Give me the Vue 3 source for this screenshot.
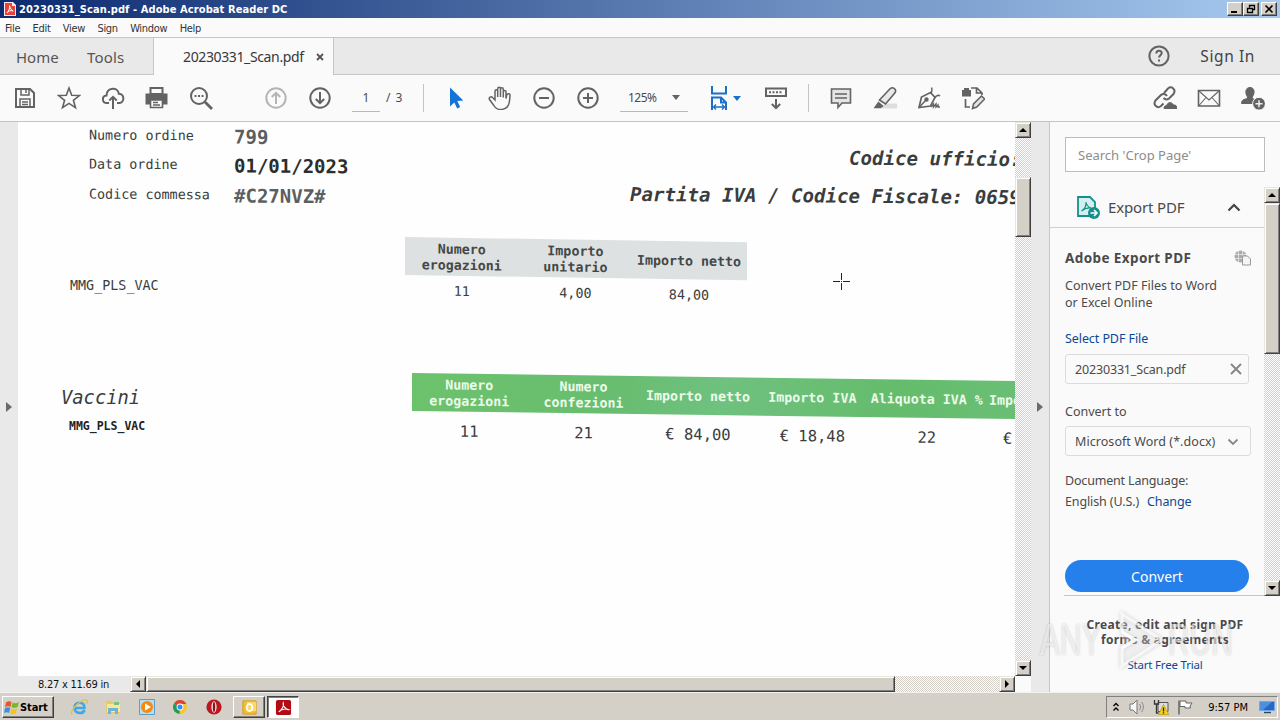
<template>
  <div class="desktop">
    <header class="title-bar">
      <svg class="app-icon" viewBox="0 0 12 14">
        <path d="M0 0h9l3 3v11H0z" fill="#fbe9e7" />
        <path d="M1 1h7v3h3v9H1z" fill="#e8433a" />
        <path d="M3 11c2-2 3-5 2.600-7.500M3 11c1-2 4-3 6-2M5.600 4c.3 2 1.500 4 3.600 5" fill="none" stroke="#fff" stroke-width="1" />
      </svg>
      <span class="title-text">20230331_Scan.pdf - Adobe Acrobat Reader DC</span>
      <div class="window-buttons">
        <button class="win-btn"><svg viewBox="0 0 12 10"><path d="M2 8h6" stroke="#000" stroke-width="2" /></svg></button>
        <button class="win-btn"><svg viewBox="0 0 12 10"><path d="M4.500 3.500v-2h5v4h-2M2.500 4.500h5v4h-5zM4 1.500h6M2 4.500h6" fill="none" stroke="#000" stroke-width="1.300" /></svg></button>
        <button class="win-btn close"><svg viewBox="0 0 12 10"><path d="M2.500 1.500l7 7M9.500 1.500l-7 7" stroke="#000" stroke-width="1.600" /></svg></button>
      </div>
    </header>

    <nav class="menu-bar">
      <span v-for="item in menus" :key="item">{{ item }}</span>
    </nav>

    <div class="tab-bar">
      <div class="main-tabs">
        <span class="home">Home</span>
        <span class="tools">Tools</span>
      </div>
      <div class="doc-tab">
        <span>20230331_Scan.pdf</span>
        <svg viewBox="0 0 8 8"><path d="M1 1l6 6M7 1L1 7" stroke="#555" stroke-width="1.800" /></svg>
      </div>
      <div class="account">
        <svg class="icon" viewBox="0 0 24 24">
          <circle cx="12" cy="12" r="9.600" />
          <path d="M9.300 9.500c0-3.600 5.400-3.600 5.400-.4 0 2-2.700 2.200-2.700 4.500" />
          <path d="M12 15.500v2" />
        </svg>
        <span>Sign In</span>
      </div>
    </div>

    <div class="toolbar">
      <div class="tool-group first">
        <button class="tool">
          <svg class="icon" viewBox="0 0 24 24"><path d="M3 3h14l4 4v14H3z" /><path d="M8 3v6h8V3M13 4v3M7 21v-8h10v8M9 16h6M9 18.500h6" stroke-width="1.500" /></svg>
        </button>
        <button class="tool">
          <svg class="icon" viewBox="0 0 24 24"><path d="M12 2l2.700 7.200 7.700.3-6 4.800 2.100 7.400-6.500-4.300-6.500 4.300 2.100-7.400-6-4.800 7.700-.3z" stroke-width="1.600" /></svg>
        </button>
        <button class="tool">
          <svg class="icon" viewBox="0 0 24 24"><path d="M8 17H6C.8 17 .5 10 5.500 9.500 6 .8 17 1 17.800 7.700 24 7.500 23.500 17 18.500 17H16" /><path d="M12 23V11M8.300 14.500L12 10.800l3.700 3.700" /></svg>
        </button>
        <button class="tool">
          <svg class="icon" viewBox="0 0 24 24"><path d="M5.500 2h12v6h-12z" fill="#fafafa" /><path d="M1.500 8.500h20v9h-4v-3h-12v3h-4z" class="solid" /><path d="M5.500 14h12v7.500h-12zM8 16.500h5M8 19h7" fill="#fafafa" stroke-width="1.600" /></svg>
        </button>
        <button class="tool">
          <svg class="icon" viewBox="0 0 24 24"><circle cx="10" cy="10" r="8" /><path d="M16 16l7 7" stroke-width="2.800" /><path d="M5.500 10h2M9 10h2M12.500 10h2" stroke-width="1.800" /></svg>
        </button>
      </div>
      <div class="tool-group">
        <button class="tool disabled">
          <svg class="icon" viewBox="0 0 24 24"><circle cx="12" cy="12" r="9.700" /><path d="M12 18V7M7.800 11L12 6.800l4.200 4.200" /></svg>
        </button>
        <button class="tool">
          <svg class="icon" viewBox="0 0 24 24"><circle cx="12" cy="12" r="9.700" /><path d="M12 6v11M7.800 13l4.200 4.200 4.200-4.200" /></svg>
        </button>
      </div>
      <div class="page-nav">
        <span class="page-input">{{ page }}</span>
        <span class="page-total">/ {{ pageCount }}</span>
      </div>
      <i class="separator"></i>
      <div class="tool-group cursors">
        <button class="tool">
          <svg class="icon" viewBox="0 0 24 24"><path d="M6 1.500v19l4.300-4.100 2.900 6.200 3-1.500-2.900-6 6-.7z" fill="#1473d6" stroke="none" /></svg>
        </button>
        <button class="tool">
          <svg class="icon" viewBox="0 0 24 24"><path d="M7 14V5.300c0-2.200 2.700-2.200 2.700 0V11 3c0-2.200 2.800-2.200 2.800 0v8-7.500c0-2.200 2.800-2.200 2.800 0V11.500 6c0-2 2.700-2 2.700 0v6.500l.8-3.500c.7-2 3.700-1.500 3.200.7L21.500 15c-1 10-12.500 11-16 4L1.500 13.500c-1-2 1.500-3.500 3-2z" stroke-width="1.500" /></svg>
        </button>
        <button class="tool">
          <svg class="icon" viewBox="0 0 24 24"><circle cx="12" cy="12" r="9.700" /><path d="M7 12h10" /></svg>
        </button>
        <button class="tool">
          <svg class="icon" viewBox="0 0 24 24"><circle cx="12" cy="12" r="9.700" /><path d="M7 12h10M12 7v10" /></svg>
        </button>
      </div>
      <div class="zoom-select">
        <span>125%</span>
        <i class="caret"></i>
      </div>
      <div class="fit-width">
        <svg class="icon blue" viewBox="0 0 20 26"><path d="M3 1v7.500h14V1" /><path d="M3 25V12.500h9l5 5V25M12 12.500v5h5" /><path d="M4.500 22h11M7 19.500L4.500 22 7 24.500M13 19.500l2.500 2.500-2.500 2.500" stroke-width="1.400" /></svg>
        <i class="caret blue"></i>
      </div>
      <button class="tool">
        <svg class="icon" viewBox="0 0 24 24"><path d="M2 2.500h20v7.500H2z" /><path d="M5 6.200h14" stroke-dasharray="2 1.500" /><path d="M12 13v8.500M7.800 18l4.200 4 4.200-4" /></svg>
      </button>
      <i class="separator"></i>
      <div class="tool-group comments">
        <button class="tool">
          <svg class="icon" viewBox="0 0 24 24"><path d="M2.500 3h19v14H13l-4 4.500V17H2.500z" fill="#e4e4e4" stroke-width="1.600" /><path d="M6 8h12M6 12h12" stroke-width="1.500" /></svg>
        </button>
        <button class="tool">
          <svg class="icon" viewBox="0 0 24 24"><path d="M12 17.500h12v5H8z" fill="#ddd" stroke="none" /><path d="M6.500 14L17 2.800c3-2.500 7 .5 5 4L12.500 18z" fill="#e8e8e8" stroke-width="1.600" /><path d="M5.500 16.500l4 3.500-2 1.500H2z" class="solid" stroke-width="1.500" /></svg>
        </button>
        <button class="tool">
          <svg class="icon" viewBox="0 0 24 24"><path d="M2 21.500L4.500 11l9-4.500 4.500 5-4.500 8.500z" stroke-width="1.700" /><path d="M2 21.500l6.500-7M13 7c2.500 0 2-4.500 1.500-5.500M18 12c1-3 4-3 5-2" stroke-width="1.500" /><circle cx="9.500" cy="13.500" r="1.200" class="solid" /><path d="M14 21l2.500-3v3l2.500-3v3l2-2v2h2" stroke-width="1.400" /></svg>
        </button>
        <button class="tool">
          <svg class="icon" viewBox="0 0 24 24"><path d="M2 5h7v4.500H2zM4 3h3v2H4z" class="solid" /><path d="M10 2h6l5 5v2M15.500 2v5H21M4.500 13v8H9" stroke-width="1.700" /><path d="M11.500 22.500l1-4.500 8-8 3.200 3-8 8z" fill="#e4e4e4" stroke-width="1.500" /></svg>
        </button>
      </div>
      <div class="tool-group sharing">
        <button class="tool">
          <svg class="icon" viewBox="0 0 24 24"><path d="M11 7l4-4.500c3.500-3 8.500 1 5.500 5.500l-4.500 4.500c-2 1.500-4 1-5.500-.5" /><path d="M14 10c-1.500-2.500-4.500-2.500-6-1L2.500 14.500c-3 4.500 2 8.500 5.500 5.500l2.500-2.500" /><path d="M11 22.500c0-2 1-3 2.700-3 .8-4 6-3.500 6.500-.5 2.800-.5 3.800 1.500 3.800 3.500z" class="solid" stroke-width="1" /></svg>
        </button>
        <button class="tool">
          <svg class="icon" viewBox="0 0 24 24"><path d="M1.500 4.500h21v15.500h-21z" stroke-width="1.600" /><path d="M2 5l10 9L22 5M2 19.500l7-8M22 19.500l-7-8" stroke-width="1.100" /></svg>
        </button>
        <button class="tool">
          <svg class="icon" viewBox="0 0 24 24"><path d="M9 1.500c5 0 5 6 2.300 9.500v1.500c3 1 4.200 2 4.200 5H.500c0-3.500 2-4 6-5V11C4 7.500 4 1.500 9 1.500z" class="solid" stroke-width="1" /><circle cx="18" cy="17.700" r="6.400" class="solid" stroke="#fafafa" stroke-width="1" /><path d="M14.500 17.700h7M18 14.200v7" stroke="#eee" stroke-width="1.500" /></svg>
        </button>
      </div>
    </div>

    <main class="workspace">
      <div class="gutter left"><i class="arrow-right"></i></div>

      <section class="doc-view">
        <div class="doc-body">
          <div class="scan">
            <div class="scan-top">
              <dl class="order">
                <template v-for="row in order" :key="row.label">
                  <dt>{{ row.label }}</dt>
                  <dd :class="row.tone">{{ row.value }}</dd>
                </template>
              </dl>
              <div class="codes">
                <p class="office">Codice ufficio:</p>
                <p>Partita IVA / Codice Fiscale: 0659</p>
              </div>
            </div>

            <div class="entry">
              <span class="entry-name">MMG_PLS_VAC</span>
              <div class="table grey">
                <div class="table-head">
                  <span v-for="col in summary" :key="col.head">{{ col.head }}</span>
                </div>
                <div class="table-row">
                  <span v-for="col in summary" :key="col.head">{{ col.value }}</span>
                </div>
              </div>
            </div>

            <div class="entry vaccines">
              <div class="entry-title">
                <h2>Vaccini</h2>
                <b>MMG_PLS_VAC</b>
              </div>
              <div class="table green">
                <div class="table-head">
                  <span v-for="col in vaccines" :key="col.head">{{ col.head }}</span>
                </div>
                <div class="table-row">
                  <span v-for="col in vaccines" :key="col.head">{{ col.value }}</span>
                </div>
              </div>
            </div>
            <i class="crosshair"></i>
          </div>
          <div class="scroll-y">
            <button class="scroll-btn up"></button>
            <div class="track"><div class="thumb"></div></div>
            <button class="scroll-btn down"></button>
          </div>
        </div>
        <div class="doc-foot">
          <span class="page-size">8.27 x 11.69 in</span>
          <button class="scroll-btn prev"></button>
          <div class="track-x"><div class="thumb"></div></div>
          <button class="scroll-btn next"></button>
          <i class="corner"></i>
        </div>
      </section>

      <div class="gutter right"><i class="arrow-right"></i></div>

      <aside class="panel">
        <div class="search">Search 'Crop Page'</div>
        <div class="panel-scroll">
          <div class="panel-content">
            <div class="export-head">
              <svg class="export-icon" viewBox="0 0 24 24">
                <path d="M2 2h12l5 5v14H2z" fill="#d5efee" stroke="#14908c" stroke-width="1.800" />
                <path d="M5.500 16c3-2 5-5 4.500-9 .5 3 2 5 5 6-3-.5-6 0-9.500 3z" fill="none" stroke="#14908c" stroke-width="1.200" />
                <circle cx="18" cy="18" r="6" fill="#14908c" />
                <path d="M14.500 18h6M18 15l3 3-3 3" fill="none" stroke="#fff" stroke-width="1.700" />
              </svg>
              <span>Export PDF</span>
              <svg class="chevron" viewBox="0 0 14 9"><path d="M1.500 7.500L7 2l5.500 5.500" /></svg>
            </div>
            <div class="export-body">
              <div class="heading">
                <h3>Adobe Export PDF</h3>
                <svg viewBox="0 0 17 16"><circle cx="6.500" cy="6.500" r="6" fill="#aaa" /><path d="M1 4.500h11M1 8.500h11M4.500 1v11M8.500 1v11" stroke="#ddd" /><path d="M8.500 6h5l3 3v6h-8z" fill="#f4f4f4" stroke="#999" /></svg>
              </div>
              <p class="blurb">Convert PDF Files to Word<br>or Excel Online</p>
              <a class="select-file">Select PDF File</a>
              <div class="field file">
                <span>20230331_Scan.pdf</span>
                <svg viewBox="0 0 12 12"><path d="M1 1l10 10M11 1L1 11" stroke="#858585" stroke-width="1.900" /></svg>
              </div>
              <label class="convert-label">Convert to</label>
              <div class="field format">
                <span>Microsoft Word (*.docx)</span>
                <svg viewBox="0 0 12 8"><path d="M1.500 1.500L6 6l4.500-4.500" fill="none" stroke="#888" stroke-width="1.900" /></svg>
              </div>
              <p class="lang">Document Language:</p>
              <p class="lang-value"><span>English (U.S.)</span><a>Change</a></p>
              <button class="convert">Convert</button>
            </div>
          </div>
          <div class="scroll-y">
            <button class="scroll-btn up"></button>
            <div class="track"><div class="thumb"></div></div>
            <button class="scroll-btn down"></button>
          </div>
        </div>
        <div class="promo">
          <b>Create, edit and sign PDF</b>
          <b class="second">forms &amp; agreements</b>
          <a>Start Free Trial</a>
        </div>
        <div class="watermark">
          <span>ANY</span>
          <svg viewBox="0 0 50 60"><path d="M6 4l40 26L6 56V38l12-8-12-8z" /><path d="M6 22l14 8-14 8" /></svg>
          <span>RUN</span>
        </div>
      </aside>
    </main>

    <footer class="taskbar">
      <button class="start">
        <svg viewBox="0 0 16 15">
          <path d="M2 2.500c2-1.500 4-1.500 5.500-.5L6.500 7C5 6 3 6 1 7z" fill="#e8562a" />
          <path d="M8.500 2.500c2 1 4 1 6.500-.5l-1.500 5c-2 1-4 1.200-6 .2z" fill="#76b82a" />
          <path d="M1 8c2-1 4-1 5.300 0L5 13c-1.500-1-3-1-5 0z" fill="#3d8fe0" />
          <path d="M7.200 8.500c2 1 4 1 6 0l-1.500 5c-2 1-4 1-5.700 0z" fill="#f8c21c" />
        </svg>
        <span>Start</span>
      </button>
      <div class="quick-launch">
        <svg viewBox="0 0 18 18">
          <path d="M14.500 12c-1.500 4.500-10 4-10-2.500C4.500 3 15 3 14.500 10H5" fill="none" stroke="#3da9e8" stroke-width="2.600" />
          <path d="M2 16.500C-1 13 11 1 16.500 2c1.500.5.500 3 0 4" fill="none" stroke="#e9bd3d" stroke-width="1.300" />
        </svg>
        <svg viewBox="0 0 18 18">
          <path d="M2 3h6l1 2h7v10H2z" fill="#eac965" />
          <path d="M3 6h13v8H3z" fill="#f9e69a" />
          <path d="M4 16v-6h10v6h-3v-3H7v3z" fill="#6eb4d6" />
          <path d="M10 4h5v3h-5z" fill="#7cc07e" />
        </svg>
        <svg viewBox="0 0 18 18">
          <path d="M1.500 1.500h15v15h-15z" fill="#b8dcf0" stroke="#5b9fca" />
          <circle cx="9" cy="9" r="6" fill="#f58a13" />
          <path d="M7 5.500L13 9l-6 3.500z" fill="#fff" />
        </svg>
        <svg viewBox="0 0 18 18">
          <circle cx="9" cy="9" r="7" fill="#f6c62e" />
          <path d="M9 9L3 5.400A7 7 0 0 1 15.300 6H9z" fill="#db4437" />
          <path d="M9 9l-.5 7A7 7 0 0 1 3 5.400z" fill="#1f9d58" />
          <circle cx="9" cy="9" r="3.400" fill="#fff" />
          <circle cx="9" cy="9" r="2.500" fill="#4285f4" />
        </svg>
        <svg viewBox="0 0 18 18">
          <circle cx="9" cy="9" r="7.600" fill="#b91822" />
          <ellipse cx="9" cy="9" rx="2.600" ry="5.800" fill="#f3e7e4" />
          <ellipse cx="9" cy="9" rx="1.200" ry="5" fill="#8c1119" />
        </svg>
      </div>
      <button class="task">
        <svg viewBox="0 0 18 18"><path d="M2 2h14v14H2z" fill="#f4bd30" stroke="#d99a12" /><path d="M6 3h10v10H6z" fill="#fbd86a" /><ellipse cx="9" cy="9" rx="3" ry="3.800" fill="none" stroke="#fff" stroke-width="1.900" /></svg>
      </button>
      <button class="task active">
        <svg viewBox="0 0 18 18"><rect x="1" y="1" width="16" height="16" rx="2" fill="#b30b13" /><path d="M4 13.500c3-1.500 6-6.500 4.700-9.500-1 2.500 2.800 7.500 5.800 7.300C12 10 7 10.500 4 13.500z" fill="none" stroke="#fff" stroke-width="1.200" /></svg>
      </button>
      <div class="tray">
        <svg class="up-icon" viewBox="0 0 6 10"><path d="M.5 4L3 1.500 5.500 4M.5 8.500L3 6l2.500 2.500" fill="none" stroke="#000" stroke-width="1.300" /></svg>
        <svg class="tray-icon" viewBox="0 0 16 16"><path d="M1 5h3l4-4v14l-4-4H1z" fill="#f7f7f7" stroke="#777" /><path d="M10.500 5c1.500 2 1.500 4 0 6M12.500 3c2.500 3 2.500 7 0 10" fill="none" stroke="#888" /></svg>
        <svg class="tray-icon" viewBox="0 0 16 16"><path d="M5 3.500h10v9H5z" fill="#ddd" stroke="#555" /><path d="M1.500 1v4h4V1M3.500 5v9h2" fill="none" stroke="#333" stroke-width="1.300" /><path d="M10.500 5.500l5.300 10H5.500z" fill="#f8ce1c" stroke="#b38f00" stroke-width=".6" /><path d="M10.500 8.500v4M10.500 13.300v1.200" stroke="#222" stroke-width="1.300" /></svg>
        <svg class="tray-icon" viewBox="0 0 16 16"><path d="M2 15.500V1.500" stroke="#666" stroke-width="1.500" /><path d="M3 2h6v2h6l-2 3 .5 2H8V7.500H3z" fill="#fff" stroke="#666" /></svg>
        <span class="clock">9:57 PM</span>
        <svg class="tray-icon desk" viewBox="0 0 16 16"><path d="M.5 2.500h15v9H.5z" fill="#2765c7" stroke="#6ea8ea" /><path d="M1 3h12L4 11H1z" fill="#4d8ee0" /><path d="M5 13.500h7" stroke="#345" stroke-width="1.400" /></svg>
      </div>
    </footer>
  </div>
</template>

<script setup>
import { ref } from 'vue'

const menus = ['File', 'Edit', 'View', 'Sign', 'Window', 'Help']

const page = ref(1)
const pageCount = 3

const order = [
  { label: 'Numero ordine', value: '799', tone: 'soft' },
  { label: 'Data ordine', value: '01/01/2023', tone: 'dark' },
  { label: 'Codice commessa', value: '#C27NVZ#', tone: 'soft' }
]

const summary = [
  { head: 'Numero erogazioni', value: '11' },
  { head: 'Importo unitario', value: '4,00' },
  { head: 'Importo netto', value: '84,00' }
]

// the last column runs off the visible part of the page
const vaccines = [
  { head: 'Numero erogazioni', value: '11' },
  { head: 'Numero confezioni', value: '21' },
  { head: 'Importo netto', value: '€ 84,00' },
  { head: 'Importo IVA', value: '€ 18,48' },
  { head: 'Aliquota IVA %', value: '22' },
  { head: 'Impo', value: '€' }
]
</script>

<style>
html,
body {
  margin: 0;
  overflow: hidden;
}
</style>

<style scoped>
* {
  box-sizing: border-box;
}

p,
h2,
h3,
dl,
dd {
  margin: 0;
}

button {
  padding: 0;
  border: none;
  background: none;
  font-family: inherit;
}

svg {
  display: block;
  flex: none;
}

.desktop {
  width: 1280px;
  height: 720px;
  display: flex;
  flex-direction: column;
  overflow: hidden;
  background: #fafafa;
  color: #4a4a4a;
  font-family: 'Noto Sans', 'Open Sans', sans-serif;
}

.title-bar {
  flex: none;
  height: 18px;
  display: flex;
  align-items: center;
  padding: 0 3px 0 4px;
  background: linear-gradient(90deg, #0c2a70 0%, #a6caf0 100%);
}

.app-icon {
  width: 12px;
  height: 14px;
}

.title-text {
  margin-left: 3px;
  color: #fff;
  font-family: 'DejaVu Sans Condensed', 'DejaVu Sans', sans-serif;
  font-stretch: condensed;
  font-weight: 700;
  font-size: 11px;
  line-height: 18px;
  letter-spacing: 0.09px;
  white-space: nowrap;
  padding-top: 1px;
}

.window-buttons {
  display: flex;
  margin-left: auto;
}

.win-btn {
  width: 16px;
  height: 14px;
  display: flex;
  align-items: center;
  justify-content: center;
  background: #d4d0c8;
  border: 1px solid;
  border-color: #fff #404040 #404040 #fff;
  box-shadow: inset -1px -1px #808080;
}

.win-btn svg {
  width: 12px;
  height: 10px;
}

.win-btn.close {
  margin-left: 2px;
}

.menu-bar {
  flex: none;
  height: 20px;
  display: flex;
  gap: 12.300px;
  padding-left: 5px;
  border-bottom: 1px solid #c6c6c6;
  background: #fbfafa;
  color: #333;
  font-family: 'DejaVu Sans Condensed', 'DejaVu Sans', sans-serif;
  font-stretch: condensed;
  font-size: 11px;
  line-height: 21px;
  letter-spacing: -0.3px;
}

.tab-bar {
  flex: none;
  height: 37px;
  display: flex;
  background: #e9e9e9;
  font-size: 15px;
  line-height: 38px;
}

.main-tabs {
  width: 154px;
  display: flex;
  padding-left: 16px;
  border-right: 1px solid #c6c6c6;
  border-bottom: 1px solid #c6c6c6;
  color: #555;
}

.home {
  width: 71px;
}

.tools {
  letter-spacing: 0.2px;
}

.doc-tab {
  width: 180px;
  display: flex;
  align-items: center;
  padding-left: 29px;
  border-right: 1px solid #c6c6c6;
  background: #fafafa;
  color: #383838;
  font-size: 14px;
}

.doc-tab span {
  width: 133px;
  letter-spacing: -0.37px;
}

.doc-tab svg {
  width: 8px;
  height: 8px;
}

.account {
  flex: 1;
  display: flex;
  align-items: center;
  justify-content: flex-end;
  gap: 29px;
  padding-right: 25px;
  border-bottom: 1px solid #c6c6c6;
  color: #444;
  font-size: 15.500px;
  letter-spacing: 0.6px;
}

.icon {
  width: 24px;
  height: 24px;
  fill: none;
  stroke: #636363;
  stroke-width: 2;
}

.icon .solid {
  fill: #636363;
}

.toolbar {
  flex: none;
  height: 47px;
  display: flex;
  align-items: center;
  padding: 0 5px 0 3px;
  border-bottom: 1px solid #c2c6c4;
  background: #fafafa;
}

.tool-group {
  display: flex;
}

.tool-group.first {
  margin-right: 31px;
}

.tool {
  flex: none;
  width: 44px;
  height: 44px;
  display: flex;
  align-items: center;
  justify-content: center;
}

.tool.disabled .icon {
  stroke: #b4b4b4;
}

.page-nav {
  width: 81px;
  display: flex;
  padding-left: 10px;
  font-size: 12px;
  line-height: 26px;
}

.page-input {
  width: 28px;
  height: 27px;
  border-bottom: 1px solid #b8b8b8;
  text-align: center;
}

.page-total {
  margin-left: 6px;
  word-spacing: 2px;
}

.separator {
  width: 1px;
  height: 28px;
  background: #c4c4c4;
}

.cursors {
  margin: 0 10px;
}

.zoom-select {
  width: 68px;
  height: 28px;
  display: flex;
  align-items: center;
  justify-content: space-between;
  padding: 0 8px;
  border-bottom: 1px solid #b8b8b8;
  font-size: 12px;
}

.zoom-select span {
  letter-spacing: -0.5px;
}

.caret {
  border: 4px solid transparent;
  border-top: 5px solid #636363;
  border-bottom: none;
}

.caret.blue {
  border-top-color: #1b6fc8;
}

.fit-width {
  width: 66px;
  display: flex;
  align-items: center;
  gap: 4px;
  padding-left: 21px;
}

.icon.blue {
  width: 20px;
  height: 26px;
  stroke: #1b6fc8;
}

.fit-width + .tool {
  margin-right: 10px;
}

.comments {
  margin-left: 10px;
}

.sharing {
  margin-left: auto;
}

.workspace {
  flex: none;
  height: 570px;
  display: flex;
}

.gutter {
  flex: none;
  display: flex;
  align-items: center;
  justify-content: center;
  background: #e9e9e9;
}

.gutter.left {
  width: 18px;
}

.gutter.right {
  width: 19px;
  border-right: 1px solid #c6c6c6;
}

.arrow-right {
  border: 5px solid transparent;
  border-left: 6px solid #6b6b6b;
  border-right: none;
}

.doc-view {
  flex: none;
  width: 1013px;
  display: flex;
  flex-direction: column;
}

.doc-body {
  height: 554px;
  display: flex;
}

.scan {
  position: relative;
  flex: none;
  width: 997px;
  overflow: hidden;
  background: #fefefe;
  color: #3a3d3d;
  font-family: 'DejaVu Sans Mono', monospace;
  font-size: 13.400px;
}

.scan-top {
  display: flex;
  height: 115px;
}

.order {
  display: grid;
  grid-template-columns: 145px 140px;
  grid-auto-rows: 29.300px;
  align-content: start;
  padding-left: 71px;
  line-height: 27px;
}

.order dt {
  transform: skewY(0.3deg);
}

.order dd {
  padding-top: 1px;
  font-size: 19px;
  font-weight: 700;
  line-height: 29px;
  transform: skewY(0.4deg);
}

.order .soft {
  color: #5b5f5f;
}

.order .dark {
  color: #2c2e2e;
}

.codes {
  flex: none;
  margin-left: 255.500px;
  padding-top: 21px;
  font-size: 19.100px;
  font-style: italic;
  font-weight: 700;
  line-height: 28px;
  white-space: nowrap;
  transform: skewY(0.45deg);
  transform-origin: left top;
}

.codes .office {
  padding-left: 219px;
  margin-bottom: 9.500px;
}

.entry {
  display: flex;
}

.entry-name {
  flex: none;
  width: 335px;
  margin-left: 52px;
  padding-top: 41px;
}

.table {
  flex: none;
  transform-origin: left top;
}

.table-head,
.table-row {
  display: grid;
}

.table-head {
  height: 38px;
  align-items: center;
  padding-top: 1px;
  font-weight: 700;
  font-size: 13.300px;
  line-height: 15.500px;
  text-align: center;
}

.table-row {
  text-align: center;
}

.grey {
  width: 342px;
  transform: skewY(0.9deg);
}

.grey .table-head {
  background: #dde1e1;
  color: #444848;
}

.grey .table-head,
.grey .table-row {
  grid-template-columns: repeat(3, 113.600px);
}

.grey .table-head span {
  padding: 0 4px;
}

.grey .table-head span:last-child {
  padding: 0;
}

.grey .table-row {
  line-height: 31px;
}

.vaccines {
  margin-top: 67px;
}

.entry-title {
  flex: none;
  width: 351px;
  margin-left: 43px;
  padding-top: 11px;
}

.entry-title h2 {
  font-size: 18.800px;
  font-style: italic;
  font-weight: 400;
  line-height: 28px;
}

.entry-title b {
  display: block;
  margin-left: 8px;
  color: #222;
  font-size: 11.500px;
  line-height: 29px;
}

.green {
  transform: skewY(0.76deg);
}

.green .table-head {
  background: linear-gradient(100deg, #6cc26c, #68bd70 30%, #6fc17f 45%, #65bc6c 70%, #6cc07a);
  color: #ecfbea;
}

.green .table-head,
.green .table-row {
  grid-template-columns: repeat(6, 114.400px);
}

.green .table-head span:nth-child(-n + 2) {
  padding: 0 10px;
}

.green .table-row {
  font-size: 15.500px;
  line-height: 40px;
}

.green .table-head span:last-child {
  padding-left: 5px;
  text-align: left;
}

.green .table-row span:last-child {
  padding-left: 19px;
  text-align: left;
}

.crosshair {
  position: absolute;
  left: 815px;
  top: 151px;
  width: 17px;
  height: 17px;
  background:
    linear-gradient(#222, #222) 0 8px / 7px 1px no-repeat,
    linear-gradient(#222, #222) 10px 8px / 7px 1px no-repeat,
    linear-gradient(#222, #222) 8px 0 / 1px 7px no-repeat,
    linear-gradient(#222, #222) 8px 10px / 1px 7px no-repeat,
    linear-gradient(#222, #222) 8px 8px / 1px 1px no-repeat;
}

.scroll-y {
  flex: none;
  width: 16px;
  display: flex;
  flex-direction: column;
}

.track,
.track-x {
  flex: 1;
  background: repeating-conic-gradient(#fff 0 25%, #d4d0c8 0 50%) 0 0 / 2px 2px;
}

.thumb,
.scroll-btn {
  background: #d4d0c8;
  border: 1px solid;
  border-color: #e8e5de #404040 #404040 #e8e5de;
  box-shadow: inset 1px 1px #fff, inset -1px -1px #808080;
}

.scroll-btn {
  flex: none;
  width: 16px;
  height: 16px;
  display: flex;
  align-items: center;
  justify-content: center;
}

.scroll-btn::before {
  content: '';
  border: 4px solid transparent;
}

.scroll-btn.up::before {
  border-top: none;
  border-bottom-color: #000;
}

.scroll-btn.down::before {
  border-bottom: none;
  border-top-color: #000;
}

.scroll-btn.prev::before {
  border-left: none;
  border-right-color: #000;
}

.scroll-btn.next::before {
  border-right: none;
  border-left-color: #000;
}

.doc-body .thumb {
  height: 60px;
  margin-top: 39px;
}

.doc-foot {
  height: 16px;
  display: flex;
}

.page-size {
  width: 112px;
  padding-left: 20px;
  background: #e9e9e9;
  color: #111;
  font-family: 'DejaVu Sans Condensed', 'DejaVu Sans', sans-serif;
  font-stretch: condensed;
  font-size: 11px;
  line-height: 18px;
  letter-spacing: -0.25px;
}

.track-x .thumb {
  width: 749px;
  height: 16px;
}

.corner {
  width: 16px;
  background: #fafafa;
}

.panel {
  position: relative;
  flex: none;
  width: 230px;
  display: flex;
  flex-direction: column;
  background: #fafafa;
}

.search {
  width: 200px;
  height: 35px;
  margin: 15px 0 0 15px;
  padding-left: 12px;
  border: 1px solid #bdbdbd;
  background: #fff;
  color: #8c8c8c;
  font-size: 13px;
  line-height: 34px;
}

.panel-scroll {
  height: 409px;
  margin-top: 15px;
  display: flex;
}

.panel-content {
  width: 214px;
}

.export-head {
  height: 41px;
  display: flex;
  align-items: center;
  padding: 0 23px 0 26px;
  border-bottom: 1px solid #cfcfcf;
  font-size: 15px;
  letter-spacing: -0.15px;
}

.export-icon {
  width: 24px;
  height: 24px;
}

.export-head span {
  margin-left: 8px;
}

.chevron {
  width: 14px;
  height: 9px;
  margin-left: auto;
  fill: none;
  stroke: #444;
  stroke-width: 2.200;
}

.export-body {
  height: 368px;
  display: flex;
  flex-direction: column;
  margin-left: 14px;
  padding: 20px 13px 0 1px;
  border-bottom: 1px solid #c6c6c6;
  font-size: 12.500px;
}

.heading {
  display: flex;
  align-items: center;
  justify-content: space-between;
}

.heading h3 {
  font-size: 13.500px;
  line-height: 20px;
  letter-spacing: 0.4px;
}

.heading svg {
  width: 17px;
  height: 16px;
}

.blurb {
  margin-top: 9px;
  line-height: 17px;
}

a {
  color: #0a4a94;
}

.select-file {
  margin-top: 19px;
  line-height: 17px;
  letter-spacing: -0.08px;
}

.field {
  flex: none;
  height: 30px;
  display: flex;
  align-items: center;
  justify-content: space-between;
  border: 1px solid #dcdcdc;
  border-radius: 3px;
}

.field.file {
  width: 184px;
  margin-top: 7px;
  padding: 0 6px 0 9px;
  letter-spacing: -0.17px;
}

.file svg {
  width: 12px;
  height: 12px;
}

.convert-label {
  margin-top: 19px;
  line-height: 17px;
}

.field.format {
  width: 186px;
  margin-top: 6px;
  padding: 1px 11px 0 9px;
}

.field.format span {
  letter-spacing: 0.06px;
}

.format svg {
  width: 12px;
  height: 8px;
}

.lang {
  margin-top: 16px;
  line-height: 17px;
  letter-spacing: -0.18px;
}

.lang-value {
  display: flex;
  gap: 8px;
  margin-top: 4px;
  line-height: 17px;
  letter-spacing: -0.12px;
}

.convert {
  width: 184px;
  height: 32px;
  margin-top: 50px;
  border-radius: 16px;
  background: #2680eb;
  color: #fff;
  font-size: 14px;
}

.panel-scroll .thumb {
  height: 151px;
}

.promo {
  display: flex;
  flex-direction: column;
  align-items: center;
  padding-top: 21px;
  font-size: 12px;
  line-height: 15px;
  letter-spacing: 0.3px;
}

.promo a {
  margin-top: 10px;
  font-size: 11.500px;
  letter-spacing: -0.2px;
}

.watermark {
  position: absolute;
  left: -10px;
  top: 488px;
  display: flex;
  align-items: center;
  color: rgba(255, 255, 255, 0.55);
  font-family: 'Liberation Sans', sans-serif;
  font-size: 44px;
  line-height: 60px;
  text-shadow: 0 0 3px rgba(0, 0, 0, 0.2);
}

.watermark span {
  width: 64px;
  transform: scaleX(0.68);
  transform-origin: left center;
}

.watermark svg {
  width: 50px;
  height: 60px;
  margin: 0 2px 0 12px;
  fill: rgba(255, 255, 255, 0.3);
  stroke: rgba(255, 255, 255, 0.7);
  stroke-width: 3;
  filter: drop-shadow(0 0 2px rgba(0, 0, 0, 0.25));
}

.taskbar {
  flex: none;
  height: 28px;
  display: flex;
  align-items: center;
  padding: 1px 2px 0;
  border-top: 1px solid #f4f2ee;
  background: #d4d0c8;
  color: #000;
  font-family: 'DejaVu Sans Condensed', 'DejaVu Sans', sans-serif;
  font-stretch: condensed;
  font-size: 11px;
}

.start,
.task {
  height: 22px;
  display: flex;
  align-items: center;
  border: 1px solid;
  border-color: #fff #404040 #404040 #fff;
  box-shadow: inset -1px -1px #808080;
}

.start {
  width: 52px;
  padding-left: 1px;
  font-weight: 700;
  font-size: 11px;
}

.start span {
  letter-spacing: -0.1px;
}

.start svg {
  width: 16px;
  height: 15px;
}

.quick-launch {
  display: flex;
  gap: 15.800px;
  margin: 0 10px 0 16px;
}

.quick-launch svg {
  width: 18px;
  height: 18px;
}

.task {
  width: 32px;
  justify-content: center;
  margin-right: 2px;
}

.task svg {
  width: 17px;
  height: 17px;
}

.task.active {
  background: #fff;
  border-color: #404040 #fff #fff #404040;
  box-shadow: inset 1px 1px #808080;
}

.tray {
  width: 172px;
  height: 22px;
  display: flex;
  align-items: center;
  margin-left: auto;
  padding: 0 2px 0 6px;
  border: 1px solid;
  border-color: #808080 #fff #fff #808080;
}

.up-icon {
  width: 6px;
  height: 10px;
  margin-right: 2px;
}

.tray-icon {
  width: 16px;
  height: 16px;
  margin-left: 8px;
}

.clock {
  margin-left: auto;
}

.tray-icon.desk {
  margin-left: 11px;
}
</style>
